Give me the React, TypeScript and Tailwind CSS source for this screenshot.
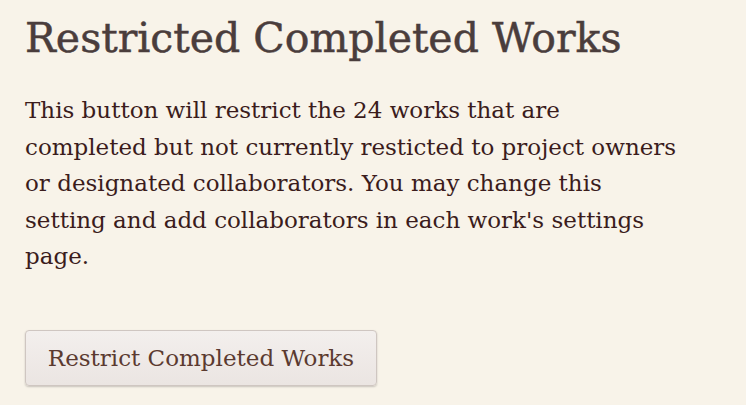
const App = () => {
    return (
        <div className="min-h-screen bg-[#f8f3e9] px-[25px] pt-[13px]">
            <h1 className="font-['DejaVu_Serif',serif] text-[41px] leading-[50px] font-normal text-[#4a3d3c] [-webkit-text-stroke:0.5px_#4a3d3c]">
                Restricted Completed Works
            </h1>

            <p className="mt-[29px] font-['DejaVu_Serif',serif] text-[23px] leading-[36.6px] text-[#3b1c1c]">
                This button will restrict the 24 works that are<br />
                completed but not currently resticted to project owners<br />
                or designated collaborators. You may change this<br />
                setting and add collaborators in each work's settings<br />
                page.
            </p>

            <button className="mt-[55px] h-[56px] w-[352px] rounded-[4px] border border-[#cfc6c1] bg-gradient-to-b from-[#f3efed] to-[#ebe5e2] font-['DejaVu_Serif',serif] text-[23px] text-[#5b3a30] shadow-[0_1px_2px_rgba(0,0,0,0.2)]">
                Restrict Completed Works
            </button>
        </div>
    )
}

export default App
